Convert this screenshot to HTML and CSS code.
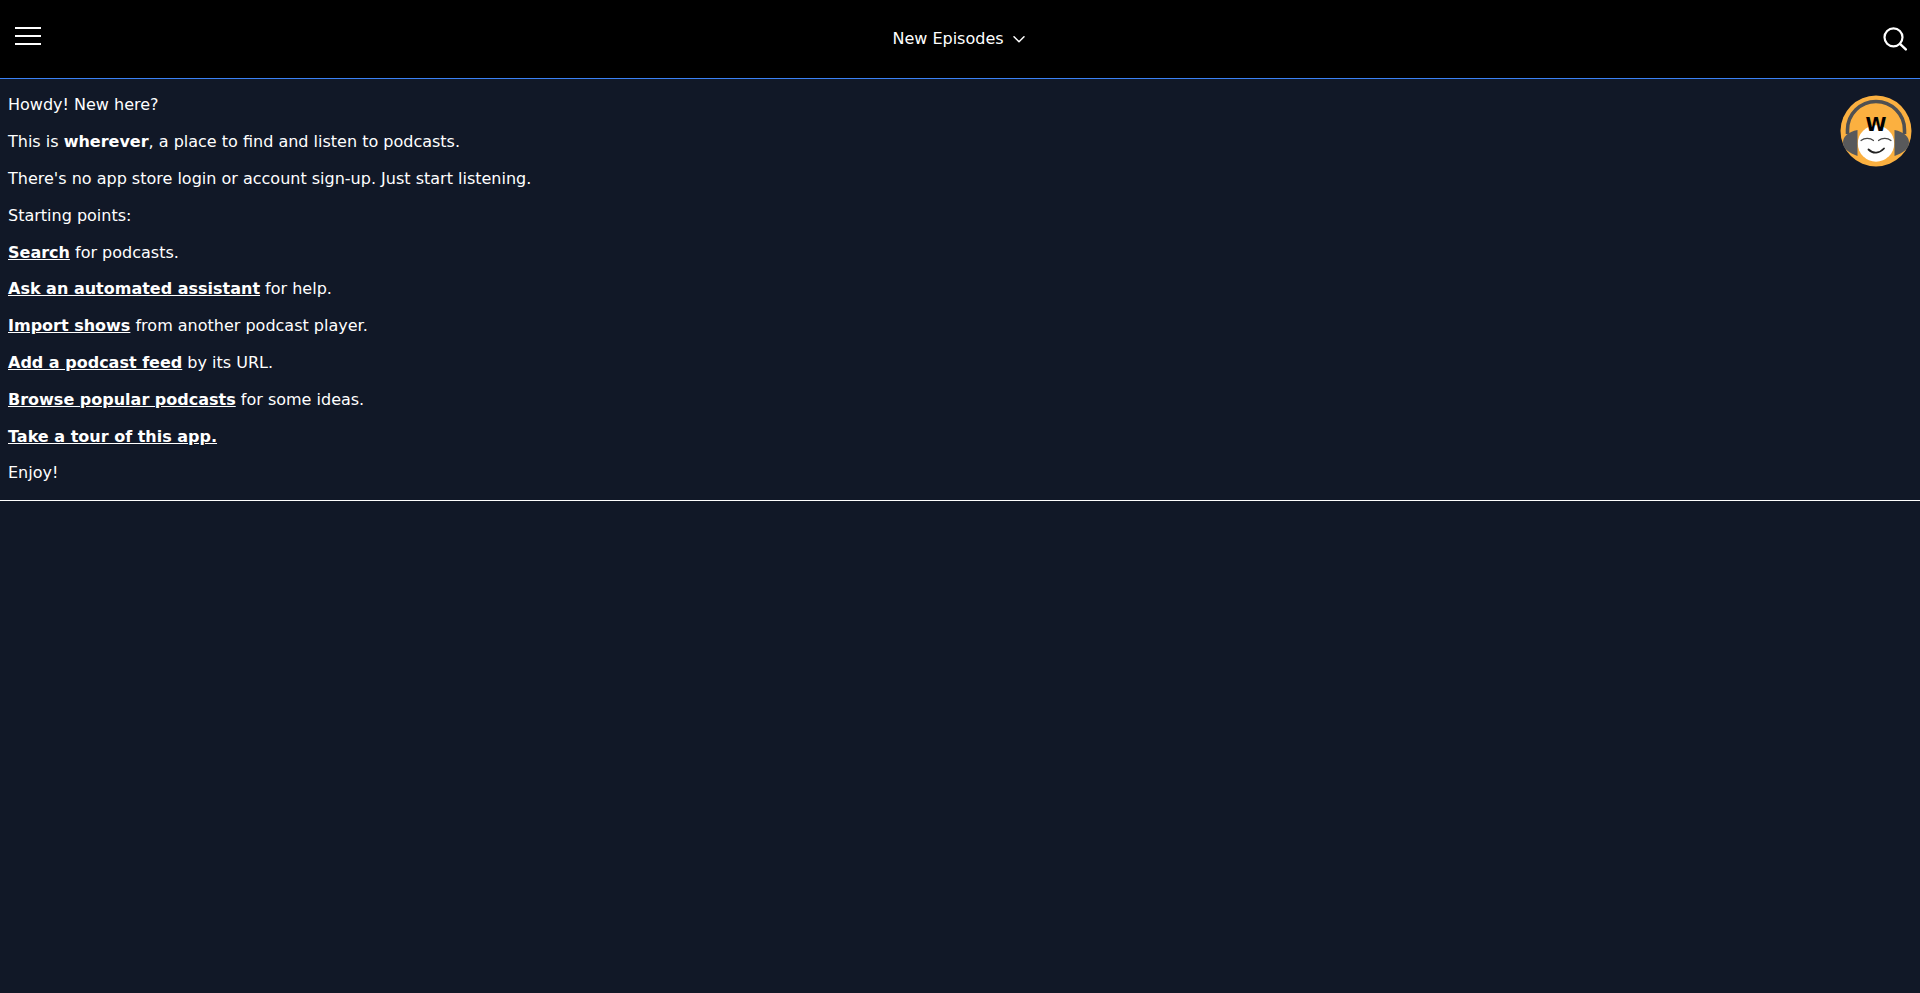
FILE: index.html
```html
<!DOCTYPE html>
<html lang="en">
<head>
<meta charset="utf-8">
<title>wherever</title>
<link rel="stylesheet" href="styles.css">
</head>
<body>
<header class="topbar">
  <button class="icon-btn menu-btn" aria-label="Menu">
    <svg width="26" height="20" viewBox="0 0 26 20"><path d="M0 2h26M0 10h26M0 18h26" stroke="#fff" stroke-width="2" fill="none"/></svg>
  </button>
  <div class="title">New Episodes
    <svg class="chev" width="14" height="14" viewBox="0 0 14 14"><path d="M2 4.8l5 5 5-5" stroke="#fff" stroke-width="1.5" fill="none" stroke-linecap="round" stroke-linejoin="round"/></svg>
  </div>
  <button class="icon-btn search-btn" aria-label="Search">
    <svg width="26" height="26" viewBox="0 0 26 26"><circle cx="10.5" cy="12.3" r="9" stroke="#fff" stroke-width="2.2" fill="none"/><path d="M17 18.8l5.8 5.6" stroke="#fff" stroke-width="2.4" fill="none" stroke-linecap="round"/></svg>
  </button>
</header>
<main class="welcome">
  <svg class="logo" width="74" height="74" viewBox="0 0 74 74">
    <circle cx="37" cy="37" r="35.5" fill="#fbb040"/>
    <path d="M8.500 40V36a28.500 28.500 0 0 1 57 0v4" fill="none" stroke="#4f5052" stroke-width="3.600"/>
    <circle cx="37" cy="49.500" r="18.200" fill="#fff"/>
    <path d="M18.500 36v26C10 59 4 55 4 48.500c0-6 5-10.500 14.500-12.500z" fill="#58595b"/>
    <path d="M55.500 36v26c8.500-3 14.500-7 14.500-13.500 0-6-5-10.500-14.500-12.500z" fill="#58595b"/>
    <text class="logo-w" x="37" y="37" text-anchor="middle">W</text>
    <path d="M22 46.500c3.500-2.800 9-2.800 12.500 0M39.500 46.500c3.500-2.800 9-2.800 12.500 0" fill="none" stroke="#444" stroke-width="1.200" stroke-linecap="round"/>
    <path d="M29.500 55.500c4.500 4.500 11 4 15.500-1" fill="none" stroke="#222" stroke-width="1.800" stroke-linecap="round"/>
  </svg>
  <p>Howdy! New here?</p>
  <p>This is <b>wherever</b>, a place to find and listen to podcasts.</p>
  <p>There's no app store login or account sign-up. Just start listening.</p>
  <p>Starting points:</p>
  <p><a href="#">Search</a> for podcasts.</p>
  <p><a href="#">Ask an automated assistant</a> for help.</p>
  <p><a href="#">Import shows</a> from another podcast player.</p>
  <p><a href="#">Add a podcast feed</a> by its URL.</p>
  <p><a href="#">Browse popular podcasts</a> for some ideas.</p>
  <p><a href="#">Take a tour of this app.</a></p>
  <p>Enjoy!</p>
</main>
</body>
</html>
```
FILE: styles.css
```css
html, body {
  margin: 0;
  height: 100%;
  background: #111827;
  color: #fff;
  font-family: "DejaVu Sans", sans-serif;
  font-size: 16px;
  line-height: 24px;
}
.topbar {
  box-sizing: border-box;
  height: 79px;
  background: #000;
  border-bottom: 1px solid #3b82f6;
  display: flex;
  justify-content: space-between;
  align-items: flex-start;
  padding: 0 15px;
}
.icon-btn {
  background: none;
  border: 0;
  padding: 0;
  display: block;
  line-height: 0;
}
.menu-btn { margin-top: 26px; }
.search-btn { margin-top: 25px; margin-right: -4px; }
.title {
  margin-top: 27px;
  margin-right: 6px;
  display: flex;
  align-items: center;
  gap: 8px;
}
.welcome {
  padding: 14.4px 8px 14.8px;
  border-bottom: 1px solid #fff;
}
.welcome p { margin: 0 0 12.8px; }
.welcome p:last-child { margin-bottom: 0; }
.welcome a { color: #fff; font-weight: 700; text-decoration: underline; }
.logo { float: right; margin: 1px -1px 0 0; }
.logo-w {
  font-family: "DejaVu Sans", sans-serif;
  font-size: 19px;
  font-weight: 700;
  fill: #000;
}
```
